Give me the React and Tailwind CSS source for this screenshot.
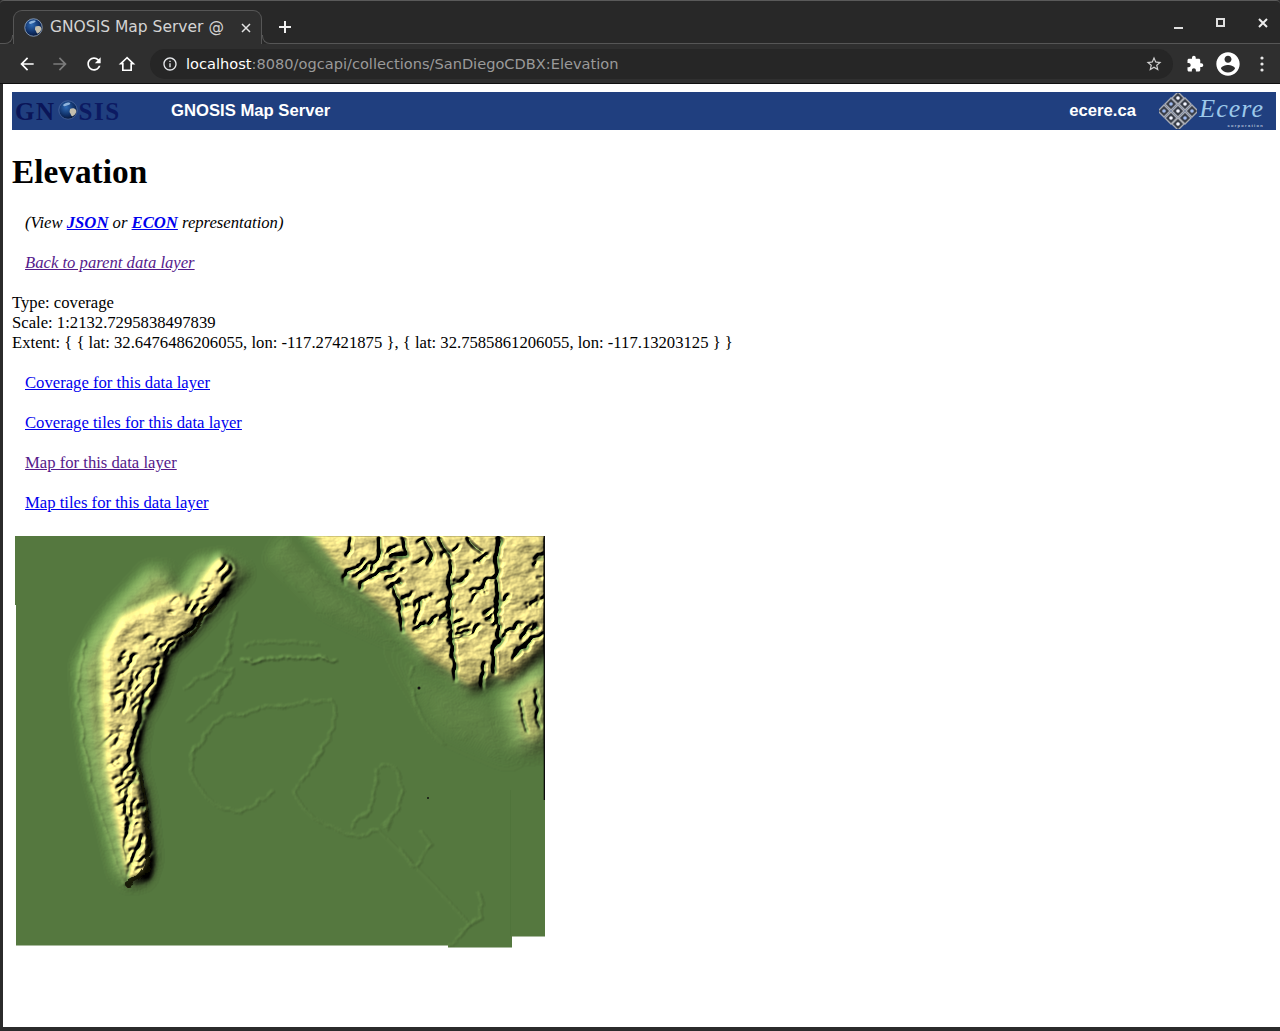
import React from 'react';

const serif = { fontFamily: '"Liberation Serif", serif' };

const Glyph = ({ d, className }) => (
  <svg viewBox="0 0 24 24" className={className} fill="currentColor">
    <path d={d} />
  </svg>
);

const icons = {
  back: 'M20 11H7.83l5.59-5.59L12 4l-8 8 8 8 1.41-1.41L7.83 13H20v-2z',
  forward: 'M12 4l-1.41 1.41L16.17 11H4v2h12.17l-5.58 5.59L12 20l8-8z',
  reload: 'M17.65 6.35C16.2 4.9 14.21 4 12 4c-4.42 0-7.99 3.58-7.99 8s3.57 8 7.99 8c3.73 0 6.84-2.55 7.73-6h-2.08c-.82 2.33-3.04 4-5.65 4-3.31 0-6-2.69-6-6s2.69-6 6-6c1.66 0 3.14.69 4.22 1.78L13 11h7V4l-2.35 2.35z',
  info: 'M11 7h2v2h-2zm0 4h2v6h-2zm1-9C6.48 2 2 6.48 2 12s4.48 10 10 10 10-4.48 10-10S17.52 2 12 2zm0 18c-4.41 0-8-3.59-8-8s3.59-8 8-8 8 3.59 8 8-3.59 8-8 8z',
  star: 'M22 9.24l-7.19-.62L12 2 9.19 8.63 2 9.24l5.46 4.73L5.82 21 12 17.27 18.18 21l-1.63-7.03L22 9.24zM12 15.4l-3.76 2.27 1-4.28-3.32-2.88 4.38-.38L12 6.1l1.71 4.04 4.38.38-3.32 2.88 1 4.28L12 15.4z',
  puzzle: 'M20.5 11H19V7c0-1.1-.9-2-2-2h-4V3.5C13 2.12 11.88 1 10.5 1S8 2.12 8 3.5V5H4c-1.1 0-1.99.9-1.99 2v3.8H3.5c1.49 0 2.7 1.21 2.7 2.7s-1.21 2.7-2.7 2.7H2V20c0 1.1.9 2 2 2h3.8v-1.5c0-1.49 1.21-2.7 2.7-2.7 1.49 0 2.7 1.21 2.7 2.7V22H17c1.1 0 2-.9 2-2v-4h1.5c1.38 0 2.5-1.12 2.5-2.5S21.88 11 20.5 11z',
  account: 'M12 2C6.48 2 2 6.48 2 12s4.48 10 10 10 10-4.48 10-10S17.52 2 12 2zm0 3c1.66 0 3 1.34 3 3s-1.34 3-3 3-3-1.34-3-3 1.34-3 3-3zm0 14.2c-2.5 0-4.71-1.28-6-3.22.03-1.99 4-3.08 6-3.08 1.99 0 5.97 1.09 6 3.08-1.29 1.94-3.5 3.22-6 3.22z',
};

const Globe = ({ className, id, ring }) => (
  <svg viewBox="0 0 20 20" className={className}>
    <defs>
      <radialGradient id={id} cx="0.4" cy="0.35" r="0.75">
        <stop offset="0" stopColor="#2f6bb5" />
        <stop offset="0.6" stopColor="#0f2f66" />
        <stop offset="1" stopColor="#050d24" />
      </radialGradient>
    </defs>
    <circle cx="10" cy="10" r="9.2" fill={`url(#${id})`} stroke={ring} strokeWidth="0.8" />
    <path d="M5 5c2-2 5-3 7-2 1 1-1 2-3 2.5S6 7 5 5z" fill="#8fb4dc" />
    <path d="M12 9c2-1 5-1 6 1s-1 5-3 6-2-2-3-3 0-3 0-4z" fill="#c4bfae" />
  </svg>
);

// knot of small diamonds from the vendor logo
const EcereKnot = () => {
  const cells = [[19, 5], [12, 11], [26, 11], [5, 18], [19, 18], [33, 18], [12, 25], [26, 25], [19, 31]];
  return (
    <svg viewBox="0 0 38 36" className="w-[38px] h-[36px]">
      {cells.map(([x, y], i) => (
        <g key={i}>
          <path d={`M${x} ${y - 6}l6 6-6 6-6-6z`} fill="#3a3f4a" stroke="#a8abb3" strokeWidth="1.4" />
          <circle cx={x} cy={y} r="1.8" fill={i % 2 ? '#9fb9ee' : '#f4f6ff'} />
        </g>
      ))}
    </svg>
  );
};

// small repeatable random, the terrain must come out the same every run
const makeRandom = (seed) => {
  let s = seed;
  return () => {
    s = (s * 16807) % 2147483647;
    return s / 2147483647;
  };
};

const mesaGullies = [
  ['M500 538 C496 570 498 592 500 635 C498 648 492 656 495 672', 3],
  ['M453 562 C448 585 452 606 451 622 C455 640 454 660 457 682', 2.6],
  ['M403 632 C402 616 402 604 393 585', 2.6],
  ['M415 630 C424 624 432 624 437 617', 2.2],
  ['M415 622 C418 614 420 610 422 602', 2],
  ['M360 588 C370 580 380 574 390 568', 2.2],
  ['M343 582 C346 574 350 568 367 562', 2],
  ['M403 538 C408 552 410 558 393 557', 2.6],
  ['M352 538 C350 548 352 552 348 556', 2],
  ['M440 538 C444 548 448 552 452 558', 2],
  ['M513 658 C522 650 534 642 544 632', 2.2],
  ['M380 538 C382 552 378 562 372 570', 2],
  ['M425 538 C430 550 436 556 430 566', 1.8],
  ['M468 538 C472 546 478 550 482 552', 1.8],
  ['M520 700 C524 716 524 724 528 732', 1.4],
  ['M536 690 C538 706 538 716 540 728', 1.4],
  ['M486 664 C482 674 482 684 484 690', 1.8],
];

// side gullies on the mesa run up to the north-east
const mesaRandom = makeRandom(7321);
for (let i = 0; i < 120 && mesaGullies.length < 62; i++) {
  const x = 322 + mesaRandom() * 220;
  const y = 542 + mesaRandom() * 130;
  const coast = x < 430 ? 535 + (x - 300) * 0.92 : 650;
  // the sandy middle of the mesa stays smooth
  if (y > coast - 6 || (x > 505 && y < 600 && mesaRandom() < 0.7)) continue;
  const len = 7 + mesaRandom() * 13;
  const bend = (mesaRandom() - 0.5) * 6;
  mesaGullies.push([
    `M${x.toFixed(1)} ${y.toFixed(1)} q${(len * 0.5 + bend).toFixed(1)} ${(-len * 0.2).toFixed(1)} ${len.toFixed(1)} ${(-len * 0.6).toFixed(1)}`,
    0.9 + mesaRandom() * 0.8,
  ]);
}

const ridgeGullies = [
  ['M222 558 C230 562 236 566 232 572 L222 580', 2.4],
  ['M205 562 C196 578 192 596 186 610', 1.6],
  ['M222 598 C212 612 202 622 190 634', 3],
  ['M198 620 C186 632 176 642 168 654', 2.2],
  ['M160 660 C150 680 146 700 140 716', 2.6],
  ['M134 672 C130 690 126 700 122 712', 1.5],
  ['M155 668 C146 668 136 672 132 690', 1.4],
  ['M148 700 C140 720 132 740 130 760', 2.2],
  ['M138 770 C130 790 122 800 128 820', 2.2],
  ['M136 800 C130 820 124 840 126 860', 2.2],
  ['M144 838 C136 852 128 868 128 882', 2.6],
];

// short cuts along the spine of the ridge
const spine = [[215, 582], [190, 610], [165, 640], [140, 670], [125, 700], [115, 740], [120, 780], [128, 820], [135, 860]];
const ridgeRandom = makeRandom(4409);
for (let i = 0; i < 70; i++) {
  const k = Math.floor(ridgeRandom() * spine.length);
  const [cx, cy] = spine[k];
  const spread = k < 4 ? 24 : 13;
  const x = cx + (ridgeRandom() - 0.5) * spread * 2;
  const y = cy + (ridgeRandom() - 0.5) * 30;
  const len = 4 + ridgeRandom() * 9;
  ridgeGullies.push([
    `M${x.toFixed(1)} ${y.toFixed(1)} l${len.toFixed(1)} ${(-len * (0.2 + ridgeRandom())).toFixed(1)}`,
    0.9 + ridgeRandom() * 0.9,
  ]);
}

// low relief in the bay: only a hint of height, the lighting does the rest
const bayRelief = [
  'M313 572 C330 582 345 590 357 595 C372 604 380 612 387 618 C398 630 405 640 413 648 C420 656 425 660 430 665',
  'M244 646 C262 640 285 640 320 646',
  'M236 612 C232 640 226 660 218 670',
  'M185 690 C200 675 215 672 232 668 L222 690 C210 705 195 715 185 720',
  'M190 770 C196 740 210 722 232 716 C260 708 300 702 332 700 L336 716 C330 740 310 770 295 790',
  'M190 770 C200 790 210 808 236 812 C245 812 260 800 275 792',
  'M295 792 C300 810 320 825 350 835 C362 838 372 834 380 830',
  'M380 768 C392 760 400 770 401 785 C402 800 396 815 385 828',
  'M378 830 C410 860 440 890 470 925 L482 918 C475 905 490 910 478 892',
  'M352 828 C372 812 375 790 378 770',
  'M420 830 L432 845 L414 868 L402 850',
  'M412 665 C406 690 418 720 445 745',
  'M470 925 L448 945',
];

const Terrain = () => (
  <svg viewBox="15 535 531 414" className="block w-[531px] h-[414px]">
    <defs>
      <clipPath id="mapShape">
        <path d="M15 536 H545 V936.5 H512 V947.5 H448 V945.5 H16 V605 H15 Z" />
      </clipPath>
      <filter id="blur9" x="-40%" y="-40%" width="180%" height="180%">
        <feGaussianBlur stdDeviation="9" />
      </filter>
      <filter id="blur6" x="-30%" y="-30%" width="160%" height="160%">
        <feGaussianBlur stdDeviation="6" />
      </filter>
      <filter id="blur3" x="-30%" y="-30%" width="160%" height="160%">
        <feGaussianBlur stdDeviation="3" />
      </filter>
      <filter id="carve" filterUnits="userSpaceOnUse" x="0" y="520" width="560" height="440">
        <feTurbulence type="fractalNoise" baseFrequency="0.08" numOctaves="3" seed="4" result="n" />
        <feDisplacementMap in="SourceGraphic" in2="n" scale="8" />
        <feGaussianBlur stdDeviation="0.45" />
      </filter>
      {/* hillshade: alpha of the source is a height field */}
      <filter id="hillshade" filterUnits="userSpaceOnUse" x="15" y="535" width="531" height="414" colorInterpolationFilters="sRGB">
        <feGaussianBlur in="SourceAlpha" stdDeviation="0.8" result="h" />
        <feTurbulence type="fractalNoise" baseFrequency="0.04 0.06" numOctaves="4" seed="11" />
        <feColorMatrix values="0 0 0 0 0  0 0 0 0 0  0 0 0 0 0  1.4 0 0 0 -0.2" result="n" />
        <feComposite in="h" in2="n" operator="arithmetic" k1="0.3" k2="0.85" k3="0" k4="0" result="rugged" />
        <feDiffuseLighting in="rugged" surfaceScale="9" diffuseConstant="1" lightingColor="#fff" result="shade">
          <feDistantLight azimuth="215" elevation="45" />
        </feDiffuseLighting>
        <feColorMatrix in="h" values="0 0 0 1 0  0 0 0 1 0  0 0 0 1 0  0 0 0 0 1" result="level" />
        <feComponentTransfer in="level" result="ramp">
          <feFuncR type="table" tableValues="0.333 0.47 0.80 0.88 0.92" />
          <feFuncG type="table" tableValues="0.471 0.58 0.76 0.82 0.87" />
          <feFuncB type="table" tableValues="0.247 0.33 0.45 0.52 0.58" />
        </feComponentTransfer>
        <feComposite in="ramp" in2="shade" operator="arithmetic" k1="1.414" k2="0" k3="0" k4="0" />
      </filter>
      <mask id="mesaCut" maskUnits="userSpaceOnUse" x="15" y="535" width="531" height="414">
        <rect x="15" y="535" width="531" height="414" fill="#fff" />
        <g filter="url(#carve)" fill="none" stroke="#000" strokeLinecap="round">
          {mesaGullies.map(([d, w], i) => <path key={i} d={d} strokeWidth={w} />)}
        </g>
      </mask>
      <mask id="ridgeCut" maskUnits="userSpaceOnUse" x="15" y="535" width="531" height="414">
        <rect x="15" y="535" width="531" height="414" fill="#fff" />
        <g filter="url(#carve)" fill="none" stroke="#000" strokeLinecap="round">
          {ridgeGullies.map(([d, w], i) => <path key={i} d={d} strokeWidth={w} />)}
        </g>
      </mask>
    </defs>
    <g clipPath="url(#mapShape)">
      <g filter="url(#hillshade)">
        <rect x="15" y="535" width="531" height="414" fill="#fff" fillOpacity="0.004" />

        {/* north-east mesa */}
        <g mask="url(#mesaCut)">
          <path d="M306 530 L345 578 L392 618 L425 658 L448 672 L470 690 L495 676 L505 684 L550 645 V530 Z" fill="#fff" fillOpacity="0.6" filter="url(#blur6)" />
          <path d="M330 535 L365 580 L415 625 L455 662 L495 660 L550 630 V530 Z" fill="#fff" fillOpacity="0.2" filter="url(#blur3)" />
          <path d="M505 695 L550 660 V745 L520 750 Z" fill="#fff" fillOpacity="0.42" filter="url(#blur9)" />
        </g>
        <path d="M390 640 L430 685 L495 705 L515 760 L445 730 Z" fill="#fff" fillOpacity="0.08" filter="url(#blur9)" />
        <path d="M285 535 L335 590 L400 645 L325 612 L270 560 Z" fill="#fff" fillOpacity="0.08" filter="url(#blur6)" />

        {/* point loma ridge */}
        <path d="M118 605 L100 628 L88 650 L80 665 L84 720 L92 770 L106 820 L118 872 L128 884 L145 880 L152 860 L146 800 L136 760 L142 720 L158 690 L168 655 L195 630 L226 595 L246 572 L225 558 L200 562 L182 590 L166 570 L150 570 Z" fill="#fff" fillOpacity="0.3" filter="url(#blur6)" />
        <g mask="url(#ridgeCut)">
          <path d="M122 618 L104 652 L104 700 L108 770 L120 830 L130 880 L148 876 L150 858 L144 800 L134 760 L140 720 L156 690 L166 655 L192 630 L224 592 L234 566 L220 555 L204 580 L192 600 L176 594 L160 600 Z" fill="#fff" fillOpacity="0.52" filter="url(#blur3)" />
        </g>

        {/* bay relief and the shoreline of the point */}
        <g fill="none" stroke="#fff" strokeOpacity="0.035" strokeWidth="1.5" filter="url(#carve)">
          {bayRelief.map((d, i) => <path key={i} d={d} />)}
          <path d="M243 662 C270 658 300 654 337 660" strokeOpacity="0.1" />
          <path d="M85 640 C78 670 76 690 80 720 C86 760 95 800 105 830 C115 860 120 875 125 885" strokeOpacity="0.09" />
        </g>
      </g>

      {/* deep shadow on the east face of the point */}
      <g fill="none" stroke="#0c0b05" strokeLinecap="round" filter="url(#carve)">
        <path d="M148 850 C150 866 142 878 128 884" strokeWidth="6" opacity="0.85" />
        <path d="M140 770 C146 800 148 825 150 850" strokeWidth="3.5" opacity="0.6" />
        <path d="M215 606 C205 618 196 628 185 636" strokeWidth="3.5" opacity="0.7" />
      </g>

      <circle cx="419" cy="688" r="1.5" fill="#111" />
      <circle cx="428" cy="798" r="1" fill="#111" />
      <path d="M510.5 790 V936" stroke="#4c7038" strokeWidth="1" opacity="0.5" />

      {/* dark edge along the east side */}
      <path d="M544.4 535 V800" stroke="#0c0c0c" strokeWidth="1.4" />
      <path d="M15 535.5 H545" stroke="#8f9a83" strokeWidth="1" />
    </g>
  </svg>
);

const TabStrip = () => (
  <div className="h-[44px] bg-[#282828] border-t border-[#5a5a5a] rounded-t-[4px] flex items-end">
    <div className="w-[4px] border-b border-[#565656]" />
    <div className="w-[9px] h-[9px] border-r border-b border-[#565656] rounded-br-[8px]" />
    <div className="w-[249px] h-[34px] bg-[#2f2f2f] border border-b-0 border-[#565656] rounded-t-[9px] flex items-center pl-[10px] pr-[10px] gap-[7px]">
      <Globe id="tabGlobe" ring="#9db4cf" className="w-[19px] h-[19px] shrink-0" />
      <span className="text-[15.5px] text-[#d4d4d4] whitespace-nowrap overflow-hidden flex-1">GNOSIS Map Server @</span>
      <svg viewBox="0 0 10 10" className="w-[10px] h-[10px] shrink-0" stroke="#e4e4e4" strokeWidth="1.5">
        <path d="M1 1 L9 9 M9 1 L1 9" />
      </svg>
    </div>
    <div className="w-[9px] h-[9px] border-l border-b border-[#565656] rounded-bl-[8px]" />
    <div className="flex-1 h-full border-b border-[#565656] flex items-center pl-[7px] pr-[12px]">
      <svg viewBox="0 0 14 14" className="mt-[10px] w-[14px] h-[14px]" stroke="#f0f0f0" strokeWidth="2">
        <path d="M7 1 V13 M1 7 H13" />
      </svg>
      <div className="ml-auto w-[9px] h-[2px] bg-[#e0e0e0] mt-[12px] mr-[33px]" />
      <div className="w-[9px] h-[9px] border-2 border-[#e0e0e0] mt-[1px] mr-[33px]" />
      <svg viewBox="0 0 10 10" className="w-[10px] h-[10px] mt-[1px]" stroke="#eeeeee" strokeWidth="2">
        <path d="M1 1 L9 9 M9 1 L1 9" />
      </svg>
    </div>
  </div>
);

const TopBar = () => (
  <div className="flex flex-col shrink-0 text-[#e8eaed] bg-[#282828]" style={{ fontFamily: '"DejaVu Sans", sans-serif' }}>
    <TabStrip />
    <div className="h-[40px] bg-[#2f2f2f] border-b border-[#0f0f0f] flex items-center pl-[17px]">
      <Glyph d={icons.back} className="w-[20px] h-[20px] text-white" />
      <Glyph d={icons.forward} className="ml-[13px] w-[20px] h-[20px] text-[#7c7c7c]" />
      <Glyph d={icons.reload} className="ml-[14px] w-[20px] h-[20px] text-white" />
      <svg viewBox="0 0 24 24" className="ml-[13px] w-[20px] h-[20px]" fill="none" stroke="#fff" strokeWidth="2">
        <path d="M12 4.5 L4.5 11.5 H7 V19.5 H17 V11.5 H19.5 Z" />
      </svg>
      <div className="ml-[13px] h-[30px] w-[1023px] rounded-full bg-[#262626] flex items-center pl-[12px] pr-[10px]">
        <Glyph d={icons.info} className="w-[16px] h-[16px] text-[#e8eaed]" />
        <span className="ml-[8px] text-[14.6px] whitespace-nowrap">
          <span className="text-white">localhost</span>
          <span className="text-[#9a9a9a]">:8080/ogcapi/collections/SanDiegoCDBX:Elevation</span>
        </span>
        <Glyph d={icons.star} className="ml-auto w-[18px] h-[18px] text-[#d0d0d0]" />
      </div>
      <Glyph d={icons.puzzle} className="ml-[13px] w-[18px] h-[18px] text-white" />
      <Glyph d={icons.account} className="ml-[10px] w-[28px] h-[28px] text-white" />
      <svg viewBox="0 0 4 16" className="ml-[18px] w-[4px] h-[16px]" fill="#e8e8e8">
        <circle cx="2" cy="2" r="1.6" />
        <circle cx="2" cy="8" r="1.6" />
        <circle cx="2" cy="14" r="1.6" />
      </svg>
    </div>
  </div>
);

const Banner = () => (
  <div className="h-[38px] bg-[#203f7f] flex items-center text-white font-bold text-[16.67px]" style={{ fontFamily: '"Liberation Sans", sans-serif' }}>
    <div className="w-[159px] pl-[3px] flex items-center text-[25px] font-bold tracking-[1.5px] text-[#0a1558] leading-none" style={serif}>
      <span>GN</span>
      <Globe id="logoGlobe" ring="#4d6ba3" className="w-[20px] h-[20px] ml-[2px] mb-[2px]" />
      <span className="text-[#0c1a62] ml-[1px]">SIS</span>
    </div>
    <span>GNOSIS Map Server</span>
    <span className="ml-auto">ecere.ca</span>
    <div className="ml-[23px] mr-[12px] flex items-center gap-[3px]">
      <EcereKnot />
      <div className="flex flex-col items-end w-[64px]">
        <span className="text-[26px] italic font-normal tracking-[1px] text-[#9cc8ea] leading-[28px]" style={serif}>Ecere</span>
        <span className="text-[4px] leading-[5px] tracking-[1.3px] font-bold text-[#b8c4dc]">corporation</span>
      </div>
    </div>
  </div>
);

const App = () => (
  <div className="w-[1280px] h-[1031px] flex flex-col overflow-hidden bg-[#2b2b2b]">
    <TopBar />
    <div className="flex-1 ml-[3px] mb-[4px] bg-white pt-[8px] pl-[9px] pr-[4px] text-black text-[16.67px] leading-[20px]" style={serif}>
      <Banner />
      <h1 className="mt-[23px] text-[33.33px] leading-[37px] font-bold">Elevation</h1>
      <div className="mt-[23px] ml-[13px] italic">
        (View <a href="#json" className="font-bold underline text-[#0000ee]">JSON</a> or <a href="#econ" className="font-bold underline text-[#0000ee]">ECON</a> representation)
      </div>
      <div className="mt-[20px] ml-[13px] italic">
        <a href="#parent" className="underline text-[#551a8b]">Back to parent data layer</a>
      </div>
      <div className="mt-[20px]">
        <div>Type: coverage</div>
        <div>Scale: 1:2132.7295838497839</div>
        <div>Extent: {'{ { lat: 32.6476486206055, lon: -117.27421875 }, { lat: 32.7585861206055, lon: -117.13203125 } }'}</div>
      </div>
      <div className="mt-[20px] ml-[13px] flex flex-col gap-[20px]">
        <a href="#coverage" className="underline text-[#0000ee] w-fit">Coverage for this data layer</a>
        <a href="#coverage-tiles" className="underline text-[#0000ee] w-fit">Coverage tiles for this data layer</a>
        <a href="#map" className="underline text-[#551a8b] w-fit">Map for this data layer</a>
        <a href="#map-tiles" className="underline text-[#0000ee] w-fit">Map tiles for this data layer</a>
      </div>
      <div className="mt-[22px] ml-[3px]">
        <Terrain />
      </div>
    </div>
  </div>
);

export default App;
